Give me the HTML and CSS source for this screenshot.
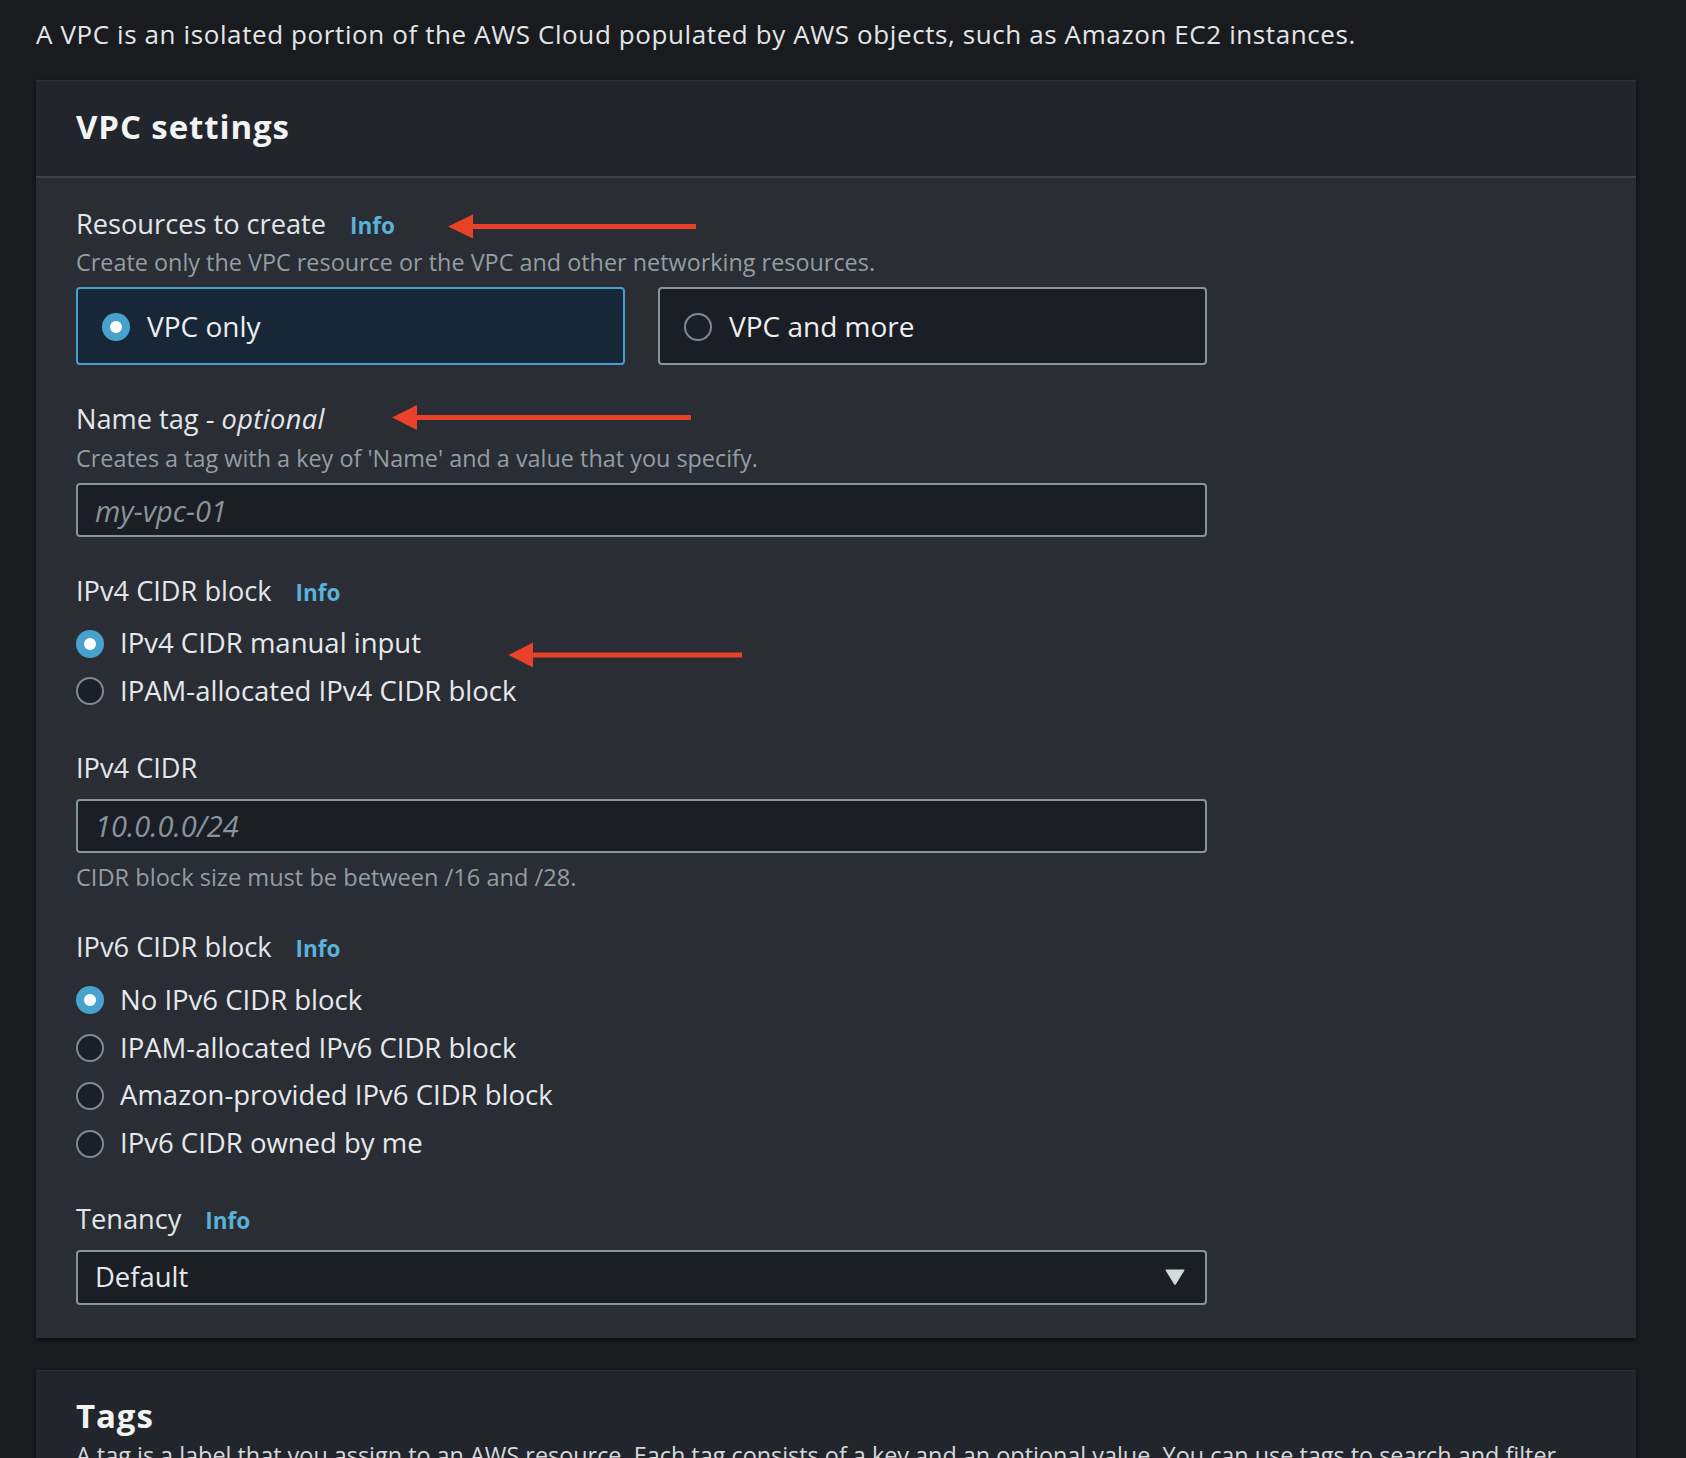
FILE: index.html
```html
<!DOCTYPE html>
<html lang="en">
<head>
<meta charset="utf-8">
<title>VPC settings</title>
<link rel="stylesheet" href="styles.css">
</head>
<body>
<div class="page">
  <p class="intro">A VPC is an isolated portion of the AWS Cloud populated by AWS objects, such as Amazon EC2 instances.</p>

  <section class="card">
    <header class="card-header">
      <h2 class="card-title">VPC settings</h2>
    </header>
    <div class="card-body">
      <div class="form">

        <div class="field field-resources">
          <div class="label-row"><span class="label">Resources to create</span><a class="info">Info</a></div>
          <div class="desc">Create only the VPC resource or the VPC and other networking resources.</div>
          <div class="tiles">
            <div class="tile tile-selected"><span class="radio radio-checked"></span><span class="tile-text">VPC only</span></div>
            <div class="tile"><span class="radio"></span><span class="tile-text">VPC and more</span></div>
          </div>
        </div>

        <div class="field field-name">
          <div class="label-row"><span class="label">Name tag - <em>optional</em></span></div>
          <div class="desc">Creates a tag with a key of 'Name' and a value that you specify.</div>
          <input class="text-input" type="text" placeholder="my-vpc-01">
        </div>

        <div class="field field-ipv4block">
          <div class="label-row"><span class="label">IPv4 CIDR block</span><a class="info">Info</a></div>
          <div class="radio-group">
            <div class="radio-row"><span class="radio radio-checked"></span><span class="radio-text">IPv4 CIDR manual input</span></div>
            <div class="radio-row"><span class="radio"></span><span class="radio-text">IPAM-allocated IPv4 CIDR block</span></div>
          </div>
        </div>

        <div class="field field-ipv4cidr">
          <div class="label-row"><span class="label">IPv4 CIDR</span></div>
          <input class="text-input input-nodesc" type="text" placeholder="10.0.0.0/24">
          <div class="constraint">CIDR block size must be between /16 and /28.</div>
        </div>

        <div class="field field-ipv6block">
          <div class="label-row"><span class="label">IPv6 CIDR block</span><a class="info">Info</a></div>
          <div class="radio-group">
            <div class="radio-row"><span class="radio radio-checked"></span><span class="radio-text">No IPv6 CIDR block</span></div>
            <div class="radio-row"><span class="radio"></span><span class="radio-text">IPAM-allocated IPv6 CIDR block</span></div>
            <div class="radio-row"><span class="radio"></span><span class="radio-text">Amazon-provided IPv6 CIDR block</span></div>
            <div class="radio-row"><span class="radio"></span><span class="radio-text">IPv6 CIDR owned by me</span></div>
          </div>
        </div>

        <div class="field field-tenancy">
          <div class="label-row"><span class="label">Tenancy</span><a class="info">Info</a></div>
          <div class="select">
            <span class="select-value">Default</span>
            <svg class="caret" width="20" height="16" viewBox="0 0 20 16"><path d="M1.5 0.5 H18.5 Q20 0.5 19.2 1.8 L10.9 15.2 Q10 16.5 9.1 15.2 L0.8 1.8 Q0 0.5 1.5 0.5 Z" fill="#d5dbdb"/></svg>
          </div>
        </div>

      </div>
    </div>
  </section>

  <section class="card card-tags">
    <header class="card-header card-header-tags">
      <h2 class="card-title">Tags</h2>
      <p class="header-desc">A tag is a label that you assign to an AWS resource. Each tag consists of a key and an optional value. You can use tags to search and filter resources.</p>
    </header>
  </section>
</div>

<svg class="annotations" width="1686" height="1458" viewBox="0 0 1686 1458">
  <g fill="#e8422a">
    <rect x="470" y="224" width="226" height="5"/>
    <polygon points="448,226.5 473,214.5 473,238.5"/>
    <rect x="414" y="415" width="277" height="5"/>
    <polygon points="392,417.5 417,405 417,430"/>
    <rect x="530" y="652.5" width="212" height="5"/>
    <polygon points="508.5,655 533,642.5 533,667.5"/>
  </g>
</svg>
</body>
</html>
```

FILE: styles.css
```css
html, body {
  margin: 0;
  height: 1458px;
  overflow: hidden;
  background: #1a1b1f;
}

body {
  position: relative;
  font-family: "Open Sans", "Noto Sans", sans-serif;
  color: #e3e6e8;
}

.page {
  padding: 18px 0 0 36px;
}

.intro {
  margin: 0;
  font-size: 26px;
  line-height: 32px;
  letter-spacing: 0.6px;
  color: #e3e6e8;
}

.card {
  width: 1600px;
  margin-top: 30px;
  background: #2a2d33;
  box-shadow: 0 2px 4px rgba(0, 0, 0, 0.55);
}

.card-tags {
  margin-top: 32px;
}

.card-header {
  background: #22252c;
  padding: 27px 40px 29px;
  border-bottom: 2px solid #3e4249;
  box-shadow: inset 0 1px 0 #2d3037;
}

.card-header-tags {
  padding: 26px 40px 30px;
  border-bottom: none;
}

.card-title {
  margin: 0;
  font-size: 33px;
  line-height: 40px;
  font-weight: 700;
  letter-spacing: 0.9px;
  color: #f2f3f3;
}

.header-desc {
  margin: 4px 0 0;
  font-size: 23.4px;
  line-height: 30px;
  color: #d5d9dc;
}

.card-body {
  padding: 28px 40px 33px;
}

.form {
  width: 1131px;
}

.field-name { margin-top: 36px; }
.field-ipv4block { margin-top: 36px; }
.field-ipv4cidr { margin-top: 41px; }
.field-ipv6block { margin-top: 37px; }
.field-tenancy { margin-top: 40px; }

.label-row {
  display: flex;
  align-items: baseline;
  gap: 24px;
  height: 36px;
}

.label {
  font-size: 27.2px;
  line-height: 36px;
  color: #e4e7e9;
}

.label em {
  font-style: italic;
  letter-spacing: 0.4px;
}

.info {
  font-size: 22.5px;
  line-height: 30px;
  font-weight: 700;
  color: #58b2d9;
  cursor: pointer;
}

.desc {
  margin-top: 5px;
  font-size: 23.4px;
  line-height: 30px;
  color: #939ea3;
}

.field-name .desc {
  margin-top: 6px;
}

.constraint {
  margin-top: 9px;
  font-size: 23.6px;
  line-height: 30px;
  color: #939ea3;
}

.tiles {
  margin-top: 10px;
  display: grid;
  grid-template-columns: 1fr 1fr;
  gap: 33px;
}

.tile {
  box-sizing: border-box;
  height: 78px;
  display: flex;
  align-items: center;
  gap: 17px;
  padding: 0 24px;
  border: 2px solid #879596;
  border-radius: 4px;
  background: #1b1e25;
}

.tile-selected {
  border-color: #44a0cc;
  background: #182738;
}

.tile-text {
  font-size: 28px;
  line-height: 36px;
  color: #eceef0;
}

.radio {
  box-sizing: border-box;
  flex: none;
  width: 28px;
  height: 28px;
  border-radius: 50%;
  border: 2px solid #7f8b8e;
  background: #1b1f27;
  display: flex;
  align-items: center;
  justify-content: center;
  margin-top: 1px;
}

.radio-checked {
  border: none;
  background: #47a2cd;
}

.radio-checked::after {
  content: "";
  width: 12px;
  height: 12px;
  border-radius: 50%;
  background: #ffffff;
}

.radio-group {
  margin-top: 16px;
  display: flex;
  flex-direction: column;
  gap: 11.8px;
}

.field-ipv6block .radio-group {
  margin-top: 17px;
}

.radio-row {
  display: flex;
  align-items: center;
  gap: 16px;
  height: 36px;
}

.radio-text {
  font-size: 27.5px;
  line-height: 36px;
  color: #e6e9eb;
}

.text-input {
  display: block;
  box-sizing: border-box;
  width: 100%;
  height: 54px;
  margin: 10px 0 0;
  padding: 0 17px;
  border: 2px solid #879596;
  border-radius: 4px;
  background: #1b1e25;
  font-family: "Open Sans", "Noto Sans", sans-serif;
  font-size: 29px;
  color: #e3e6e8;
  outline: none;
}

.input-nodesc {
  margin-top: 13px;
}

.text-input::placeholder {
  color: #89939a;
  font-style: italic;
  opacity: 1;
}

.select {
  box-sizing: border-box;
  margin-top: 13px;
  height: 54.5px;
  display: flex;
  align-items: center;
  justify-content: space-between;
  padding: 0 20px 0 17px;
  border: 2px solid #879596;
  border-radius: 4px;
  background: #1b1e25;
}

.select-value {
  font-size: 27.4px;
  line-height: 36px;
  color: #e6e9eb;
}

.caret {
  display: block;
  flex: none;
}

.annotations {
  position: absolute;
  left: 0;
  top: 0;
  pointer-events: none;
}
```
